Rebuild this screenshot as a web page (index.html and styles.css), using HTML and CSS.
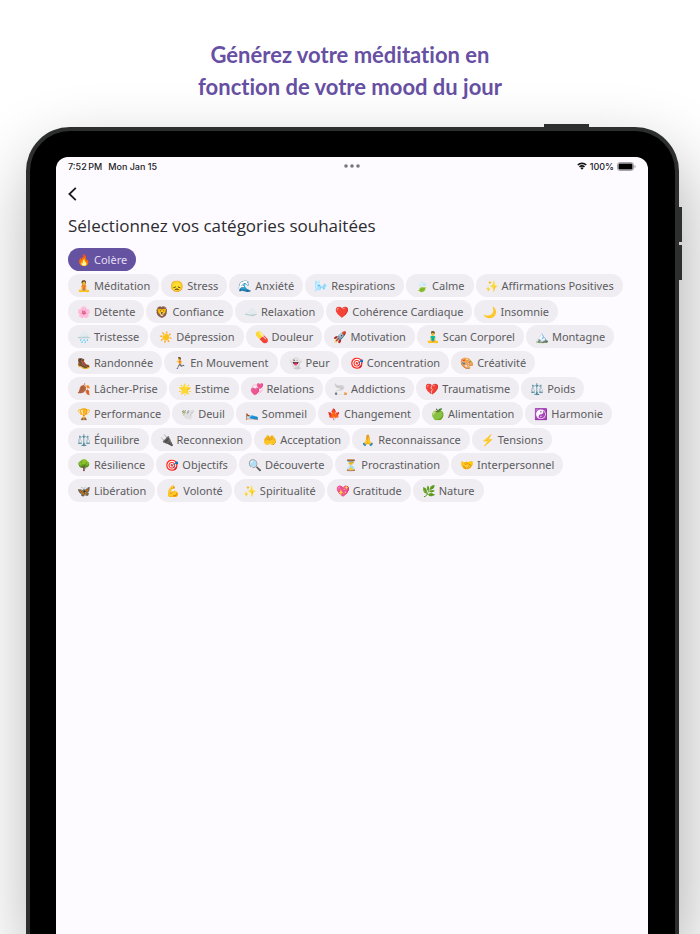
FILE: index.html
```
<!DOCTYPE html>
<html lang="fr">
<head>
    <meta charset="UTF-8">
    <meta name="viewport" content="width=device-width, initial-scale=1.0">
    <title>Générez votre méditation</title>
    <link rel="stylesheet" href="styles.css">
</head>
<body>
    <h1 class="titre">Générez votre méditation en<br>fonction de votre mood du jour</h1>

    <div class="tablette">
        <span class="bouton-haut"></span>
        <span class="bouton-volume plus"></span>
        <span class="bouton-volume moins"></span>

        <main class="ecran">
            <div class="statut">
                <div class="statut-gauche"><span>7:52&thinsp;PM</span><span>Mon Jan 15</span></div>
                <svg class="points" width="16" height="4" viewBox="0 0 16 4" fill="#77767a">
                    <circle cx="2" cy="2" r="1.8"/><circle cx="8" cy="2" r="1.8"/><circle cx="14" cy="2" r="1.8"/>
                </svg>
                <div class="statut-droite">
                    <svg width="10" height="8" viewBox="0 0 20 15" fill="none" stroke="#111" stroke-width="3.2">
                        <path d="M1.5 5.5a12.5 12.5 0 0 1 17 0M5 9.4a7.5 7.5 0 0 1 10 0"/>
                        <path d="M10 14.8 7 11.8a4 4 0 0 1 6 0z" fill="#111" stroke="none"/>
                    </svg>
                    <span>100%</span>
                    <svg width="19" height="9" viewBox="0 0 19 9">
                        <rect x=".5" y=".5" width="16" height="8" rx="2.3" fill="none" stroke="#a5a4a8"/>
                        <rect x="1.5" y="1.5" width="14" height="6" rx="1.2" fill="#000"/>
                        <path d="M17.5 3v3q1.2-.4 1.2-1.5T17.5 3z" fill="#a5a4a8"/>
                    </svg>
                </div>
            </div>

            <button class="retour" type="button" aria-label="Retour">
                <svg width="9" height="14" viewBox="0 0 9 14" fill="none" stroke="#1c1b1f" stroke-width="1.8">
                    <path d="M7.8 .8 1.4 7l6.4 6.2"/>
                </svg>
            </button>

            <h2 class="question">Sélectionnez vos catégories souhaitées</h2>

            <div class="choisies">
                <button class="puce active" type="button"><span>🔥</span>Colère</button>
            </div>

            <div class="categories">
                <button class="puce" type="button"><span>🧘</span>Méditation</button>
                <button class="puce" type="button"><span>😞</span>Stress</button>
                <button class="puce" type="button"><span>🌊</span>Anxiété</button>
                <button class="puce" type="button"><span>🌬️</span>Respirations</button>
                <button class="puce" type="button"><span>🍃</span>Calme</button>
                <button class="puce" type="button"><span>✨</span>Affirmations Positives</button>
                <button class="puce" type="button"><span>🌸</span>Détente</button>
                <button class="puce" type="button"><span>🦁</span>Confiance</button>
                <button class="puce" type="button"><span>☁️</span>Relaxation</button>
                <button class="puce" type="button"><span>❤️</span>Cohérence Cardiaque</button>
                <button class="puce" type="button"><span>🌙</span>Insomnie</button>
                <button class="puce" type="button"><span>🌧️</span>Tristesse</button>
                <button class="puce" type="button"><span>☀️</span>Dépression</button>
                <button class="puce" type="button"><span>💊</span>Douleur</button>
                <button class="puce" type="button"><span>🚀</span>Motivation</button>
                <button class="puce" type="button"><span>🧘‍♂️</span>Scan Corporel</button>
                <button class="puce" type="button"><span>🏔️</span>Montagne</button>
                <button class="puce" type="button"><span>🥾</span>Randonnée</button>
                <button class="puce" type="button"><span>🏃</span>En Mouvement</button>
                <button class="puce" type="button"><span>👻</span>Peur</button>
                <button class="puce" type="button"><span>🎯</span>Concentration</button>
                <button class="puce" type="button"><span>🎨</span>Créativité</button>
                <button class="puce" type="button"><span>🍂</span>Lâcher-Prise</button>
                <button class="puce" type="button"><span>🌟</span>Estime</button>
                <button class="puce" type="button"><span>💞</span>Relations</button>
                <button class="puce" type="button"><span>🚬</span>Addictions</button>
                <button class="puce" type="button"><span>💔</span>Traumatisme</button>
                <button class="puce" type="button"><span>⚖️</span>Poids</button>
                <button class="puce" type="button"><span>🏆</span>Performance</button>
                <button class="puce" type="button"><span>🕊️</span>Deuil</button>
                <button class="puce" type="button"><span>🛌</span>Sommeil</button>
                <button class="puce" type="button"><span>🍁</span>Changement</button>
                <button class="puce" type="button"><span>🍏</span>Alimentation</button>
                <button class="puce" type="button"><span>☯️</span>Harmonie</button>
                <button class="puce" type="button"><span>⚖️</span>Équilibre</button>
                <button class="puce" type="button"><span>🔌</span>Reconnexion</button>
                <button class="puce" type="button"><span>🤲</span>Acceptation</button>
                <button class="puce" type="button"><span>🙏</span>Reconnaissance</button>
                <button class="puce" type="button"><span>⚡</span>Tensions</button>
                <button class="puce" type="button"><span>🌳</span>Résilience</button>
                <button class="puce" type="button"><span>🎯</span>Objectifs</button>
                <button class="puce" type="button"><span>🔍</span>Découverte</button>
                <button class="puce" type="button"><span>⏳</span>Procrastination</button>
                <button class="puce" type="button"><span>🤝</span>Interpersonnel</button>
                <button class="puce" type="button"><span>🦋</span>Libération</button>
                <button class="puce" type="button"><span>💪</span>Volonté</button>
                <button class="puce" type="button"><span>✨</span>Spiritualité</button>
                <button class="puce" type="button"><span>💖</span>Gratitude</button>
                <button class="puce" type="button"><span>🌿</span>Nature</button>
            </div>
        </main>
    </div>
</body>
</html>
```

FILE: styles.css
```
* {
    box-sizing: border-box;
}

body {
    margin: 0;
    min-height: 100vh;
    display: flex;
    flex-direction: column;
    overflow: hidden;
    background-color: #fff;
    font-family: "Noto Sans", "Open Sans", sans-serif;
    color: #1c1b1f;
}

.titre {
    margin: 0;
    padding: 39px 0 24px;
    font-family: Lato, sans-serif;
    font-size: 22px;
    font-weight: 700;
    line-height: 32px;
    font-variant-ligatures: none;
    text-align: center;
    color: #6750a4;
}

.tablette {
    position: relative;
    flex: 1;
    display: flex;
    margin: 0 21px 0 26px;
    padding: 26px 27px 0 26px;
    border: 4px solid #2d2e2e;
    border-bottom: 0;
    border-radius: 44px 44px 0 0;
    background-color: #000;
    box-shadow: 5px 30px 70px rgba(0, 0, 0, 0.32);
}

.bouton-haut {
    position: absolute;
    top: -7px;
    right: 86px;
    width: 45px;
    height: 3px;
    background-color: #2d2e2e;
}

.bouton-volume {
    position: absolute;
    right: -7px;
    width: 3px;
    height: 35px;
    background-color: #2d2e2e;
}

.plus {
    top: 76px;
}

.moins {
    top: 114px;
}

.ecran {
    flex: 1;
    padding: 0 12px;
    border-radius: 12px 12px 0 0;
    background-color: #fdfbff;
}

.statut {
    display: grid;
    grid-template-columns: 1fr auto 1fr;
    align-items: center;
    height: 18px;
    font-family: Inter, sans-serif;
    font-size: 9px;
    font-weight: 500;
}

.statut-gauche {
    display: flex;
    gap: 6px;
}

.statut-droite {
    display: flex;
    align-items: center;
    justify-content: flex-end;
    gap: 3px;
}

.retour {
    display: block;
    margin: 12px 0 0;
    padding: 0;
    height: 14px;
    border: 0;
    background: none;
    cursor: pointer;
}

.retour svg {
    display: block;
}

.question {
    margin: 13px 0 10px;
    font-family: "Open Sans", "Noto Sans", sans-serif;
    font-size: 17px;
    font-weight: 400;
    line-height: 24px;
    color: #2c2b30;
}

.choisies {
    display: flex;
    margin-bottom: 3px;
}

.categories {
    display: flex;
    flex-wrap: wrap;
    align-content: space-between;
    column-gap: 2px;
    min-height: 228px;
    padding-right: 4px;
}

.puce {
    display: flex;
    align-items: center;
    gap: 3px;
    height: 23px;
    padding: 0 9px;
    border: 0;
    border-radius: 12px;
    background-color: #efedf1;
    font-family: inherit;
    font-size: 11px;
    color: #5c5b60;
    cursor: pointer;
}

.puce:hover {
    background-color: #e6e2ec;
}

.puce.active {
    background-color: #6552a0;
    color: #e4dff5;
}
```
